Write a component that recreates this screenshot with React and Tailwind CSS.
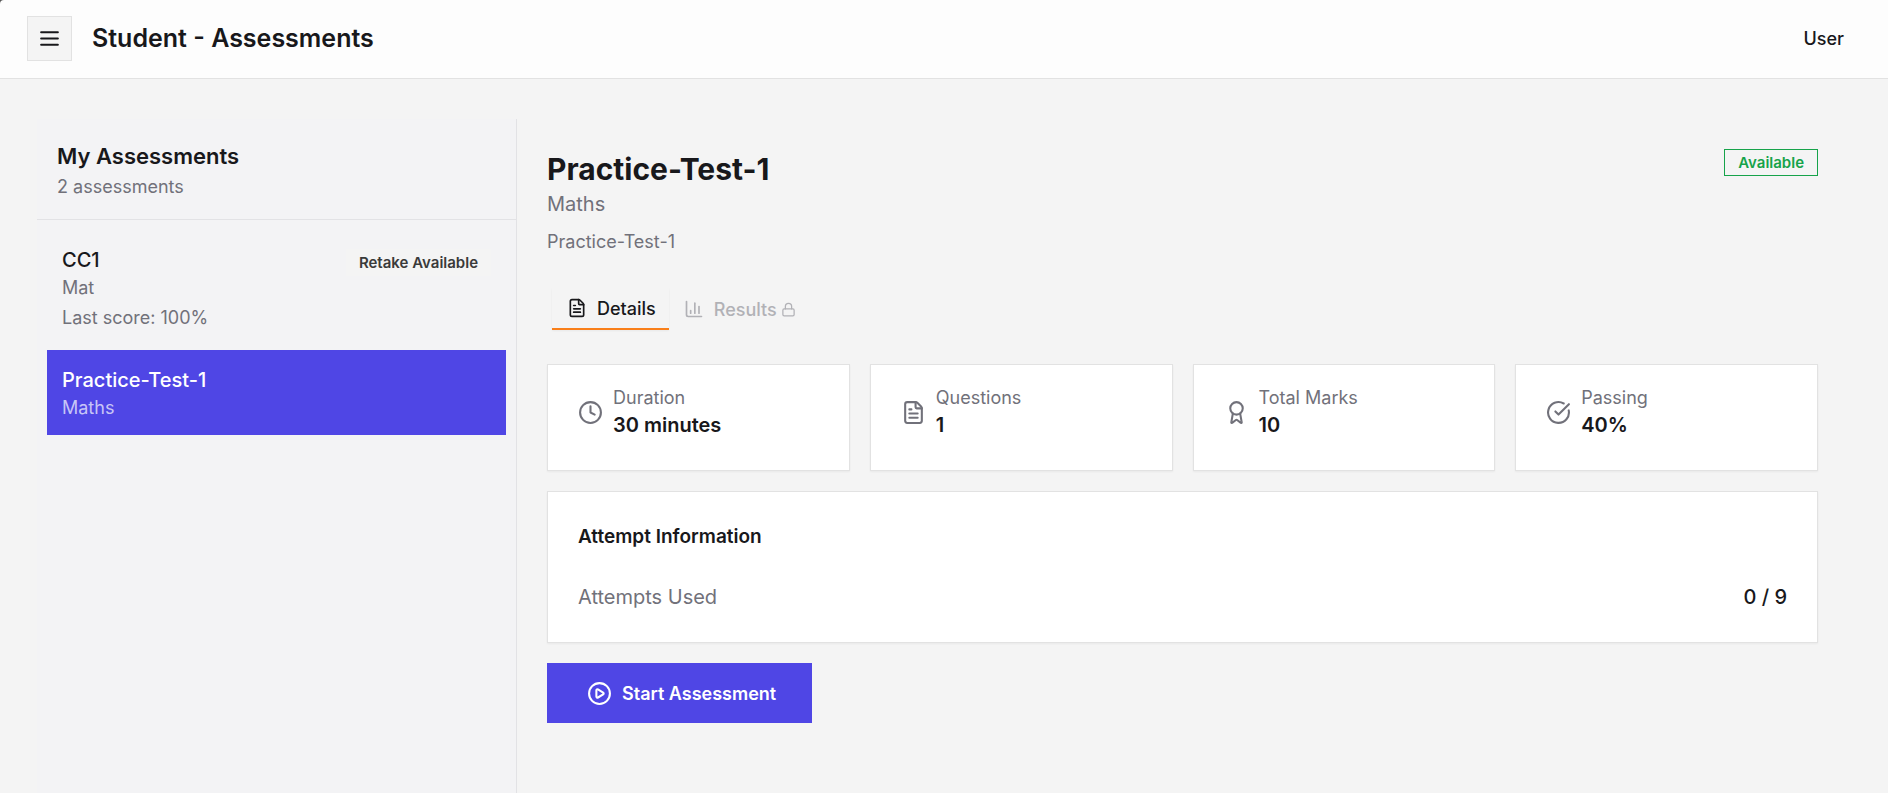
import { ChartColumn, CircleCheckBig, CirclePlay, Clock, FileText, Lock, Award } from 'lucide-react';

const stats = [
  { label: 'Duration', value: '30 minutes', icon: Clock },
  { label: 'Questions', value: '1', icon: FileText },
  { label: 'Total Marks', value: '10', icon: Award },
  { label: 'Passing', value: '40%', icon: CircleCheckBig },
];

function MenuIcon() {
  return (
    <svg width="25" height="25" viewBox="0 0 24 24" fill="none" stroke="currentColor" strokeWidth="2" strokeLinecap="round" aria-hidden="true">
      <path d="M4 6h16M4 12h16M4 18h16" />
    </svg>
  );
}

function Header() {
  return (
    <div className="bg-[#555555]">
      <header className="flex items-center justify-between rounded-tl-[4px] border-b border-[#e2e2e2] bg-[#fdfdfd] pt-4 pr-11 pb-[17px] pl-[27px]">
        <div className="flex items-center gap-5">
          <button type="button" aria-label="Toggle menu" className="flex size-[45px] items-center justify-center border border-[#e2e2e2] bg-[#f4f4f4]">
            <MenuIcon />
          </button>
          <h1 className="text-[25px] leading-[35px] font-semibold">Student - Assessments</h1>
        </div>
        <span className="text-[18px] leading-[25px] font-medium">User</span>
      </header>
    </div>
  );
}

function Sidebar() {
  return (
    <aside className="w-[480px] shrink-0 border-r border-[#e2e2e5] bg-[#f3f3f5]">
      <div className="border-b border-[#e2e2e5] p-5">
        <h2 className="text-[22px] leading-[35px] font-semibold">My Assessments</h2>
        <p className="text-[18px] leading-[25px] text-[#71717a]">2 assessments</p>
      </div>
      <div className="flex flex-col gap-[5px] p-[10px]">
        <button type="button" className="flex items-start justify-between p-[15px] text-left">
          <span className="flex flex-col">
            <span className="text-[20px] leading-[30px] font-medium">CC1</span>
            <span className="text-[18px] leading-[25px] text-[#71717a]">Mat</span>
            <span className="mt-[5px] text-[18px] leading-[25px] text-[#71717a]">Last score: 100%</span>
          </span>
          <span className="mt-1 bg-[#f4f4f4] px-[13px] text-[15px] leading-[27px] font-semibold text-[#3a3a3a]">Retake Available</span>
        </button>
        <button type="button" className="flex flex-col bg-[#4f46e5] p-[15px] text-left text-white">
          <span className="text-[20px] leading-[30px] font-medium">Practice-Test-1</span>
          <span className="text-[18px] leading-[25px] text-white/70">Maths</span>
        </button>
      </div>
    </aside>
  );
}

function Detail() {
  return (
    <section className="min-w-0 flex-1 p-[30px]">
      <div className="flex items-start justify-between">
        <div>
          <h2 className="text-[30px] leading-[40px] font-bold">Practice-Test-1</h2>
          <p className="text-[20px] leading-[30px] text-[#71717a]">Maths</p>
          <p className="mt-[10px] text-[18px] leading-[25px] text-[#71717a]">Practice-Test-1</p>
        </div>
        <span className="border border-[#16a34a] px-[13px] text-[15px] leading-[25px] font-semibold text-[#16a34a]">Available</span>
      </div>

      <div role="tablist" className="mt-[29px] flex items-center p-[5px]">
        <button type="button" role="tab" aria-selected="true" className="flex h-[42px] items-center gap-[10px] border-b-2 border-[#f97f1a] bg-[#f4f4f4] pr-[13px] pl-[15px] text-[18px] leading-[25px] font-medium shadow-xs">
          <FileText size={20} aria-hidden="true" />
          Details
        </button>
        <button type="button" role="tab" aria-selected="false" disabled className="flex h-10 items-center px-[15px] text-[18px] leading-[25px] font-medium text-[#71717a] opacity-50">
          <ChartColumn size={20} aria-hidden="true" />
          <span className="ml-[10px]">Results</span>
          <Lock size={15} className="ml-1" aria-hidden="true" />
        </button>
      </div>

      <div className="mt-[29px] grid grid-cols-2 gap-5 xl:grid-cols-4">
        {stats.map(({ label, value, icon: Icon }) => (
          <div key={label} className="flex items-center gap-[10px] border border-[#e2e2e2] bg-white px-[30px] pt-5 pb-[30px] shadow-xs">
            <Icon size={25} className="text-[#71717a]" aria-hidden="true" />
            <div>
              <p className="text-[18px] leading-[25px] text-[#71717a]">{label}</p>
              <p className="text-[20px] leading-[30px] font-semibold">{value}</p>
            </div>
          </div>
        ))}
      </div>

      <div className="mt-5 border border-[#e2e2e2] bg-white p-[30px] shadow-xs">
        <h3 className="text-[19px] leading-[30px] font-semibold">Attempt Information</h3>
        <div className="mt-[30px] flex items-center justify-between text-[20px] leading-[30px]">
          <span className="text-[#71717a]">Attempts Used</span>
          <span className="font-medium">0 / 9</span>
        </div>
      </div>

      <button type="button" className="mt-5 flex h-[60px] items-center gap-[10px] bg-[#4f46e5] pr-9 pl-10 text-[18px] leading-[25px] font-semibold text-white">
        <CirclePlay size={25} aria-hidden="true" />
        Start Assessment
      </button>
    </section>
  );
}

export default function App() {
  return (
    <div className="flex min-h-screen flex-col bg-[#f4f4f4] font-['Inter',sans-serif] text-[#18181b]">
      <Header />
      <main className="flex flex-1 pt-10 pr-10 pl-[37px]">
        <Sidebar />
        <Detail />
      </main>
    </div>
  );
}
